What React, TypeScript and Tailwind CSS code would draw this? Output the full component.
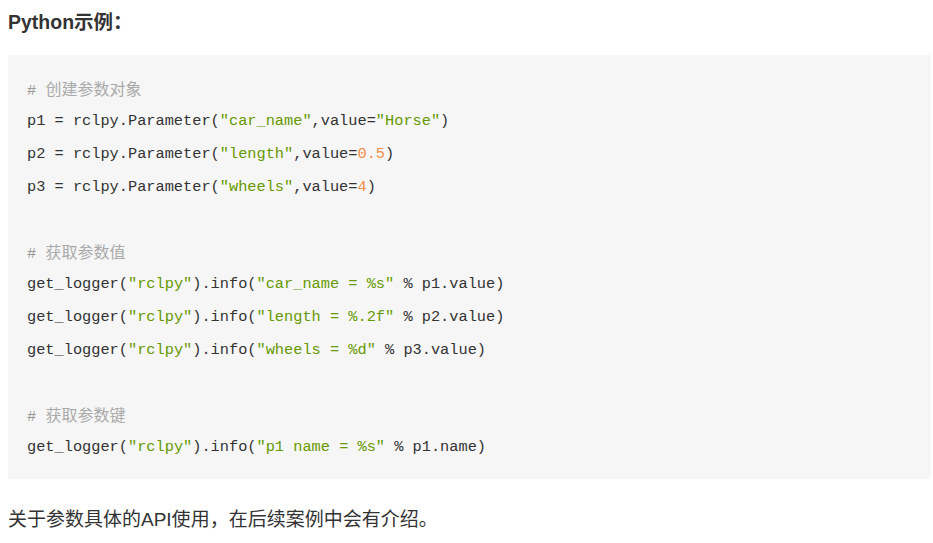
import React from "react";

const S = ({ children }: { children: React.ReactNode }) => (
  <span className="text-[#669900]">{children}</span>
);
const N = ({ children }: { children: React.ReactNode }) => (
  <span className="text-[#f08d49]">{children}</span>
);
const C = ({ text }: { text: string }) => (
  <span className="text-[#999999]">
    #{" "}
    <span className="text-[16px] text-[#aaaaaa]" style={{ fontFamily: '"Noto Sans CJK SC", sans-serif' }}>
      {text}
    </span>
  </span>
);

const Line = ({ children }: { children?: React.ReactNode }) => (
  <div className="h-[33px] leading-[33px] whitespace-pre">{children}</div>
);
const Blank = () => <div className="h-[31px]" />;

export default function App() {
  return (
    <div className="bg-white w-[933px] h-[543px] overflow-hidden pl-[8px] pr-[2px] pt-[8px]">
      <div
        className="text-[19.5px] leading-[28px] font-bold text-[#333333]"
        style={{ fontFamily: '"Liberation Sans", "Noto Sans CJK SC", sans-serif' }}
      >
        Python示例：
      </div>
      <div
        className="mt-[19px] bg-[#f6f6f6] pl-[19px] pt-[16.5px] pb-[15px] text-[15.3px] text-[#333333]"
        style={{ fontFamily: '"Liberation Mono", "Noto Sans CJK SC", monospace' }}
      >
        <Line>
          <C text="创建参数对象" />
        </Line>
        <Line>
          p1 = rclpy.Parameter(<S>"car_name"</S>,value=<S>"Horse"</S>)
        </Line>
        <Line>
          p2 = rclpy.Parameter(<S>"length"</S>,value=<N>0.5</N>)
        </Line>
        <Line>
          p3 = rclpy.Parameter(<S>"wheels"</S>,value=<N>4</N>)
        </Line>
        <Blank />
        <Line>
          <C text="获取参数值" />
        </Line>
        <Line>
          get_logger(<S>"rclpy"</S>).info(<S>"car_name = %s"</S> % p1.value)
        </Line>
        <Line>
          get_logger(<S>"rclpy"</S>).info(<S>"length = %.2f"</S> % p2.value)
        </Line>
        <Line>
          get_logger(<S>"rclpy"</S>).info(<S>"wheels = %d"</S> % p3.value)
        </Line>
        <Blank />
        <Line>
          <C text="获取参数键" />
        </Line>
        <Line>
          get_logger(<S>"rclpy"</S>).info(<S>"p1 name = %s"</S> % p1.name)
        </Line>
      </div>
      <div
        className="mt-[26px] text-[19px] leading-[30px] text-[#333333]"
        style={{ fontFamily: '"Liberation Sans", "Noto Sans CJK SC", sans-serif' }}
      >
        关于参数具体的API使用，在后续案例中会有介绍。
      </div>
    </div>
  );
}
